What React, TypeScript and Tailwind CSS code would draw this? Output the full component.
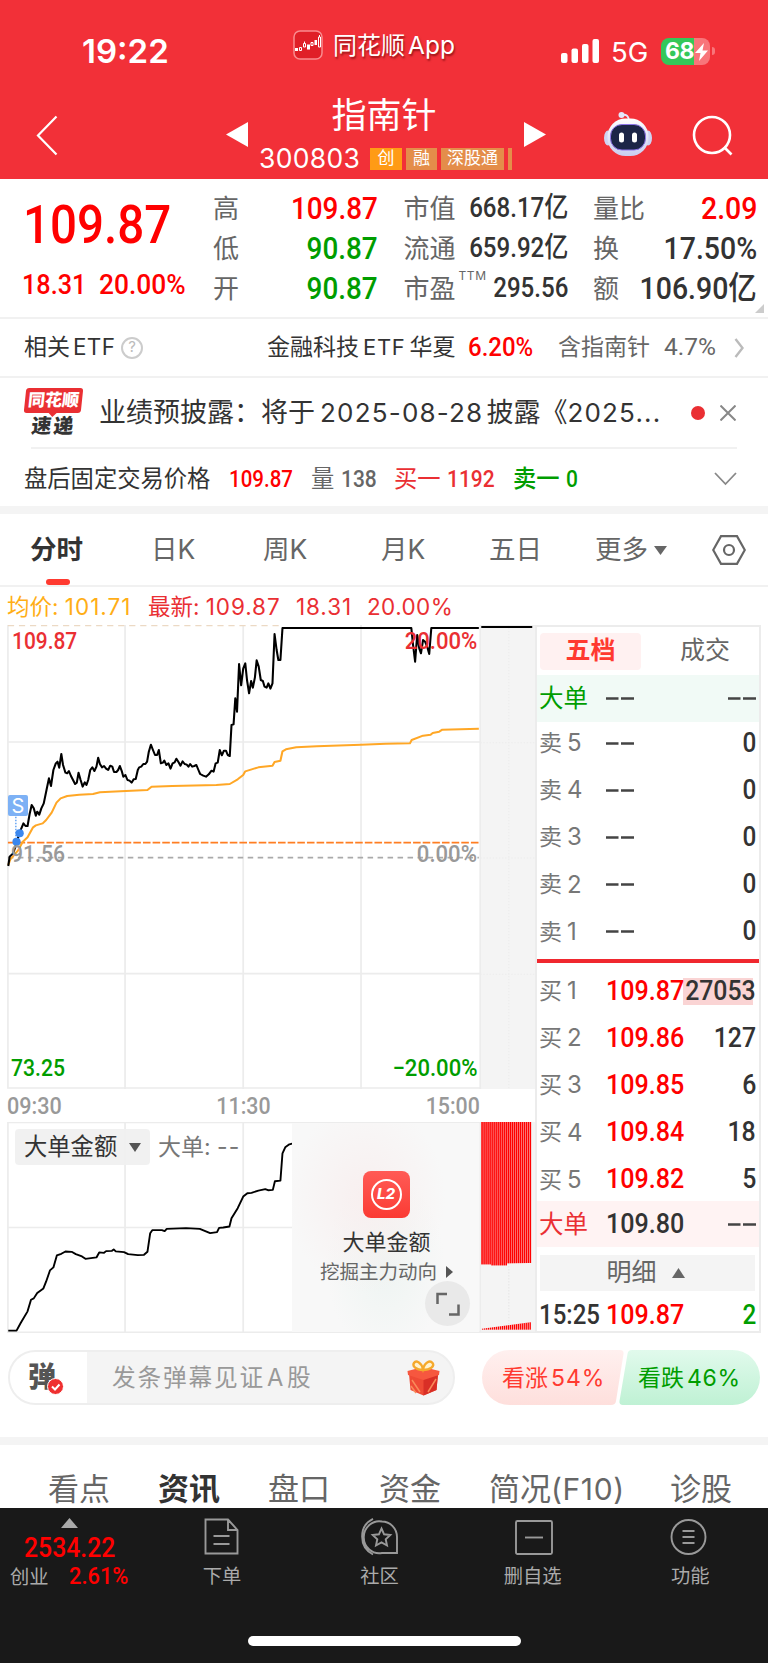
import type { ReactNode } from "react";

const PRICE_LINE =
  "24,828 28,800 38,790 48,760 56,730 62,715 68,700 74,708 80,708 86,672 92,645 98,655 104,677 108,665 114,674 120,655 127,640 135,600 142,565 148,588 155,540 162,520 167,515 172,533 178,492 183,525 190,548 195,550 200,543 206,558 212,570 218,582 223,578 228,548 234,570 240,590 246,577 251,585 256,570 262,540 268,532 274,543 280,530 285,503 290,522 296,532 302,528 308,536 314,540 320,527 326,530 331,546 338,546 343,540 348,528 354,545 358,560 364,555 370,570 376,572 382,578 388,568 394,567 400,540 404,532 410,530 416,522 422,522 427,515 432,485 438,464 444,480 450,495 456,495 461,480 467,520 473,518 477,512 483,525 489,520 495,536 501,520 507,517 512,506 518,516 524,527 530,514 536,522 542,524 547,530 552,522 558,530 564,528 570,525 576,540 581,552 590,557 598,560 606,553 614,542 620,545 626,520 632,518 638,480 644,496 650,482 656,482 661,495 667,498 672,405 678,403 683,325 688,365 694,222 700,286 706,236 712,220 717,270 723,310 729,273 734,293 740,262 745,211 751,230 757,270 763,273 768,290 774,293 779,280 785,296 791,280 797,132 803,180 808,210 814,210 820,114 1194,114 1199,165 1205,215 1211,135 1217,175 1222,190 1228,150 1234,155 1240,170 1246,192 1252,114 1390,114";

const AVG_LINE =
  "24,825 30,808 45,790 52,782 66,755 80,742 96,712 104,706 124,700 134,690 150,668 164,638 176,625 195,618 230,614 270,612 290,607 350,604 428,600 440,590 500,588 628,585 667,582 690,568 706,555 712,544 750,532 791,527 797,516 814,512 820,484 830,478 860,472 920,469 1048,464 1120,461 1190,460 1195,450 1228,437 1250,434 1256,429 1275,425 1284,419 1390,416";

const BIG_ORDER_LINE =
  "24,693 48,693 60,670 80,635 90,600 98,596 108,580 126,566 134,545 145,512 155,503 165,467 178,462 190,455 208,456 220,463 238,470 248,477 280,473 288,458 302,459 308,454 325,453 330,449 336,455 360,457 372,463 400,466 418,465 428,456 436,400 442,391 470,391 478,394 484,387 540,385 580,387 610,400 630,397 636,384 648,383 666,380 672,355 690,325 706,290 718,280 730,279 750,272 770,268 778,271 792,270 798,244 814,242 820,160 828,142 840,133 848,131";

const sells = ["5", "4", "3", "2", "1"];

const buys = [
  { level: "1", price: "109.87", volume: "27053" },
  { level: "2", price: "109.86", volume: "127" },
  { level: "3", price: "109.85", volume: "6" },
  { level: "4", price: "109.84", volume: "18" },
  { level: "5", price: "109.82", volume: "5" },
];

// 窄体数字
function Num({ children, className = "" }: { children: ReactNode; className?: string }) {
  return (
    <span className={`inline-block shrink-0 whitespace-nowrap font-medium font-[Roboto,'Noto_Sans_CJK_SC',sans-serif] ${className}`}>
      {children}
    </span>
  );
}

function StatusBar() {
  return (
    <div className="flex h-[86px] items-start text-white">
      <div className="ml-[82px] mt-[31px] w-[211px] text-[33px] leading-[40px] font-semibold">19:22</div>
      <svg className="mt-[30px] h-[30px] w-[30px] shrink-0" viewBox="0 0 30 30">
        <rect x="1" y="1" width="28" height="28" rx="6" fill="#e01f27" stroke="#f98c8f" strokeWidth="1.5" />
        <g fill="#fff">
          <rect x="2" y="18" width="3" height="3" />
          <rect x="14" y="14.500" width="3" height="5" />
          <rect x="21.500" y="10" width="2.500" height="5" />
        </g>
        <g fill="none" stroke="#fff" strokeWidth="1">
          <path d="M6.500 17.500h2v3h-2zM10.500 13.500h2v3.500h-2zM11.500 11.500v2M18 12.500h2v3h-2zM25.500 7h2v10h-2zM26.500 5v2" />
        </g>
      </svg>
      <div className="ml-[10px] mt-[28px] w-[228px] text-[24px] leading-[34px] whitespace-nowrap [text-shadow:1px_2px_2px_rgba(90,0,0,.6)]">
        同花顺<span className="ml-[3px] text-[24.500px]">App</span>
      </div>
      <svg className="mt-[39px] h-[24px] w-[38px] shrink-0" viewBox="0 0 38 24" fill="#fff">
        <rect x="0" y="14" width="6.500" height="10" rx="2" />
        <rect x="10.500" y="9.500" width="6.500" height="14.500" rx="2" />
        <rect x="21" y="5" width="6.500" height="19" rx="2" />
        <rect x="31.500" y="0" width="6.500" height="24" rx="2" />
      </svg>
      <div className="ml-[12px] mt-[33px] w-[50px] text-[27.500px] leading-[38px]">5G</div>
      <div className="mt-[38px] flex h-[27px] w-[49px] shrink-0 items-center rounded-[8px] bg-[linear-gradient(90deg,#34c759_68%,#f8757a_68%)]">
        <span className="ml-[4px] text-[23px] leading-none font-bold tracking-[-.5px]">68</span>
        <svg className="ml-px h-[18px] w-[13px] shrink-0" viewBox="0 0 13 18" fill="#fff">
          <path d="M9 0L0 10h5.500L4 18 13 7.500H7.500z" />
        </svg>
      </div>
      <div className="mt-[47px] ml-[1.500px] h-[8px] w-[3px] rounded-r-full bg-[#f8757a]" />
    </div>
  );
}

function Robot() {
  return (
    <svg className="h-[46px] w-[48px]" viewBox="0 0 48 46">
      <defs>
        <linearGradient id="robot" x1="0" y1="0" x2="0" y2="1">
          <stop offset="0" stopColor="#ffffff" />
          <stop offset="1" stopColor="#c9cdf0" />
        </linearGradient>
      </defs>
      <path d="M18 4c4-1 7 1 7 6" fill="none" stroke="#e4e6fb" strokeWidth="2" />
      <circle cx="17.500" cy="4" r="3" fill="#e4e6fb" />
      <ellipse cx="4" cy="27" rx="4" ry="7.500" fill="#cfd3f3" />
      <ellipse cx="44" cy="27" rx="4" ry="7.500" fill="#cfd3f3" />
      <rect x="3.500" y="7.500" width="41" height="37.500" rx="18" fill="url(#robot)" />
      <rect x="6.500" y="13.500" width="35" height="25.500" rx="11.500" fill="#1c2547" stroke="#8d74e8" strokeWidth="1" />
      <rect x="15" y="21.500" width="5" height="10" rx="2.500" fill="#fff" />
      <rect x="28" y="21.500" width="5" height="10" rx="2.500" fill="#fff" />
    </svg>
  );
}

function Header() {
  return (
    <header className="h-[179px] bg-[#f23038]">
      <StatusBar />
      <div className="flex h-[93px] text-white">
        <svg className="ml-[36px] mt-[29px] h-[42px] w-[22px] shrink-0" viewBox="0 0 22 42" fill="none" stroke="#fff" strokeWidth="2.200">
          <path d="M20.500 1.500L2 20.500l18.500 19" />
        </svg>
        <svg className="ml-[168px] mt-[36px] h-[25px] w-[22px] shrink-0" viewBox="0 0 22 25" fill="#fff">
          <path d="M22 0v25L0 12.500z" />
        </svg>
        <div className="ml-[11px] w-[255px] shrink-0">
          <div className="mt-[8px] ml-[-5px] h-[42px] text-center text-[35px] leading-[42px]">指南针</div>
          <div className="mt-[9px] flex items-center whitespace-nowrap">
            <div className="w-[111px] text-[26.500px] leading-[26px] tracking-[.3px]">300803</div>
            <div className="mt-[2px] flex h-[22px] gap-[4px] text-center text-[17px] leading-[21px]">
              <span className="w-[32px] bg-[#ff9b15]">创</span>
              <span className="w-[31px] bg-[#e48d4a]">融</span>
              <span className="w-[63px] bg-[#e48d4a]">深股通</span>
              <span className="w-[4px] bg-[#e48d4a]" />
            </div>
          </div>
        </div>
        <svg className="ml-[10px] mt-[36px] h-[25px] w-[22px] shrink-0" viewBox="0 0 22 25" fill="#fff">
          <path d="M0 0v25l22-12.500z" />
        </svg>
        <div className="ml-[58px] mt-[25px] shrink-0">
          <Robot />
        </div>
        <svg className="ml-[40px] mt-[29px] h-[41px] w-[42px] shrink-0" viewBox="0 0 42 41" fill="none" stroke="#fff" strokeWidth="2.600">
          <circle cx="20" cy="20" r="18" />
          <path d="M32 32l7.500 7.500" />
        </svg>
      </div>
    </header>
  );
}

function Quote() {
  return (
    <section className="flex h-[138px] text-[26px] text-[#666]">
      <div className="w-[213px] pl-[23px] text-[#ff0000]">
        <Num className="mt-[16px] origin-left scale-x-[.88] text-[54px] leading-[60px]">109.87</Num>
        <div className="mt-[11px] -ml-px flex text-[28px] leading-[38px]">
          <Num className="w-[77px] origin-left scale-x-[.9]">18.31</Num>
          <Num className="origin-left scale-x-[.94]">20.00%</Num>
        </div>
      </div>
      <div className="w-[190.500px] pt-[9px]">
        {[
          ["高", "109.87", "text-[#ff0000]"],
          ["低", "90.87", "text-[#009d00]"],
          ["开", "90.87", "text-[#009d00]"],
        ].map(([label, value, color]) => (
          <div key={label} className="flex h-[40px] w-[165px] items-center justify-between">
            <span>{label}</span>
            <Num className={`origin-right scale-x-[.87] text-[32px] leading-[40px] ${color}`}>{value}</Num>
          </div>
        ))}
      </div>
      <div className="w-[189.500px] pt-[9px]">
        {[
          ["市值", "668.17亿"],
          ["流通", "659.92亿"],
          ["市盈", "295.56"],
        ].map(([label, value]) => (
          <div key={label} className="flex h-[40px] w-[165px] items-center justify-between whitespace-nowrap">
            <span className="flex">
              {label}
              {label === "市盈" && <span className="ml-[3px] w-[26px] text-[12px] leading-[14px] tracking-[.6px]">TTM</span>}
            </span>
            <Num className="-ml-[30px] origin-right scale-x-[.86] text-[28px] leading-[40px] text-[#333]">{value}</Num>
          </div>
        ))}
      </div>
      <div className="relative w-[175px] pt-[9px]">
        {[
          ["量比", "2.09", "text-[#ff0000]"],
          ["换", "17.50%", "text-[#333]"],
          ["额", "106.90亿", "text-[#333]"],
        ].map(([label, value, color]) => (
          <div key={label} className="flex h-[40px] w-[164px] items-center justify-between whitespace-nowrap">
            <span>{label}</span>
            <Num className={`-ml-[30px] origin-right scale-x-[.89] text-[32px] leading-[40px] ${color}`}>{value}</Num>
          </div>
        ))}
        <svg className="absolute right-[4px] bottom-[4px] h-[9px] w-[9px]" viewBox="0 0 9 9" fill="#ccc">
          <path d="M9 0v9H0z" />
        </svg>
      </div>
    </section>
  );
}

function EtfRow() {
  return (
    <section className="flex h-[59px] items-center border-t-2 border-[#f1f1f1] text-[23px] whitespace-nowrap text-[#333]">
      <span className="ml-[24px] w-[97px]">
        相关<span className="ml-[3px] text-[22.500px] tracking-[.3px]">ETF</span>
      </span>
      <span className="flex h-[22px] w-[22px] items-center justify-center rounded-full border-2 border-[#ccc] text-[15px] text-[#bbb]">?</span>
      <span className="ml-[124px] w-[201px]">
        金融科技<span className="mx-[4px] text-[22px] tracking-[.7px]">ETF</span>华夏
      </span>
      <Num className="w-[90px] origin-left scale-x-[.96] text-[25px] text-[#ff0000]">6.20%</Num>
      <span className="w-[106px] text-[#666]">含指南针</span>
      <span className="w-[70px] font-[Roboto] text-[24.500px] text-[#666]">4.7%</span>
      <svg className="h-[20px] w-[10px]" viewBox="0 0 10 20" fill="none" stroke="#bbb" strokeWidth="2.400">
        <path d="M1.500 1l7 9-7 9" />
      </svg>
    </section>
  );
}

function News() {
  return (
    <section className="border-t-2 border-[#f1f1f1]">
      <div className="flex h-[69px] items-center text-[27px] whitespace-nowrap text-[#333]">
        <div className="ml-[25px] w-[57px] text-center">
          <div className="relative h-[25px] -skew-x-6 rounded-[3px] bg-[#ea2f33] text-[17px] leading-[25px] font-black text-white">
            同花顺
            <div className="absolute top-[24px] left-[24px] border-x-[5px] border-t-[5px] border-x-transparent border-t-[#ea2f33]" />
          </div>
          <div className="mt-px h-[23px] -skew-x-6 text-[20px] leading-[24px] font-black tracking-[2px]">速递</div>
        </div>
        <div className="ml-[17px] w-[594px] pt-px">
          业绩预披露：将于<span className="mr-[3px] ml-[5px] text-[26px] tracking-[1.200px]">2025-08-28</span>披露《
          <span className="text-[26px] tracking-[1.200px]">2025...</span>
        </div>
        <span className="-ml-[2px] mr-[15px] h-[14px] w-[14px] rounded-full bg-[#ea2f33]" />
        <svg className="h-[16px] w-[16px]" viewBox="0 0 16 16" stroke="#888" strokeWidth="2">
          <path d="M.5.5l15 15M15.500.5l-15 15" />
        </svg>
      </div>
      <div className="mx-[31px] h-[2px] bg-[#f1f1f1]" />
      <div className="flex h-[57px] items-center pt-[3px] text-[23.300px] whitespace-nowrap">
        <span className="ml-[24px] w-[205px] text-[#333]">盘后固定交易价格</span>
        <Num className="w-[82px] origin-left scale-x-[.88] text-[#ff0000]">109.87</Num>
        <span className="w-[30px] text-[#666]">量</span>
        <Num className="w-[53px] origin-left scale-x-[.9] text-[#666]">138</Num>
        <span className="w-[53px] text-[#ea2f33]">买一</span>
        <Num className="w-[66px] origin-left scale-x-[.9] text-[#ea2f33]">1192</Num>
        <span className="w-[53px] font-medium text-[#009d00]">卖一</span>
        <Num className="w-[148px] origin-left scale-x-[.9] text-[#009d00]">0</Num>
        <svg className="h-[14px] w-[23px] shrink-0" viewBox="0 0 23 14" fill="none" stroke="#888" strokeWidth="1.800">
          <path d="M1 1l10.500 11L22 1" />
        </svg>
      </div>
    </section>
  );
}

function PeriodTabs() {
  return (
    <nav className="flex h-[73px] items-center border-b-2 border-[#f1f1f1] pl-[30px] text-[26.500px] whitespace-nowrap text-[#666]">
      <div className="relative flex h-full w-[121px] items-center pt-px font-bold text-[#333]">
        分时
        <span className="absolute bottom-0 left-[16px] h-[6px] w-[24px] rounded-[3px] bg-[#ff3a30]" />
      </div>
      <div className="w-[112px] pt-px">日K</div>
      <div className="w-[118px] pt-px">周K</div>
      <div className="w-[108px] pt-px">月K</div>
      <div className="w-[106px] pt-px">五日</div>
      <div className="flex w-[117px] items-center gap-[6px] pt-px">
        更多
        <svg className="h-[9px] w-[13px]" viewBox="0 0 13 9" fill="#666">
          <path d="M0 0h13L6.500 9z" />
        </svg>
      </div>
      <svg className="h-[30px] w-[34px] shrink-0" viewBox="0 0 34 30" fill="none" stroke="#666" strokeWidth="2.200">
        <path d="M9 1.200h16L32.800 15 25 28.800H9L1.200 15z" />
        <circle cx="17" cy="15" r="5" />
      </svg>
    </nav>
  );
}

function PriceChart() {
  return (
    <div className="relative h-[464px]">
      <svg className="block h-[464px] w-[535px]" viewBox="0 105 1553 1392" preserveAspectRatio="none" fill="none">
        <rect x="1394" y="105" width="159" height="1392" fill="#f4f4f4" />
        <g stroke="#ececec" strokeWidth="5">
          <path d="M23 105V1494H1394M363 105V1497M706 105V1497M1048 105V1497M1394 105V1497M23 456H1394M23 1151H1394" />
          <path d="M1477 105V1497M1394 458H1553M1394 804H1553M1394 1153H1553" strokeWidth="3" strokeDasharray="4 5" />
          <path d="M1394 107H1553" strokeWidth="3" />
        </g>
        <path d="M23 107H820" stroke="#ecd9c4" strokeWidth="4" strokeDasharray="18 14" />
        <path d="M23 803H1390" stroke="#aaa" strokeWidth="5" strokeDasharray="16 13" />
        <path d="M23 758H1390" stroke="#ff7e22" strokeWidth="5" strokeDasharray="22 6" />
        <polyline points={AVG_LINE} stroke="#ffa726" strokeWidth="6" strokeLinejoin="round" />
        <polyline points={PRICE_LINE} stroke="#000" strokeWidth="6" strokeLinejoin="round" />
        <path d="M1397 111H1545" stroke="#000" strokeWidth="6" />
        <path d="M46 680V745" stroke="#5a9cf0" strokeWidth="4" strokeDasharray="5 4" />
        <ellipse cx="57" cy="730" rx="12" ry="12" fill="#3b87ee" />
        <ellipse cx="48" cy="755" rx="12" ry="12" fill="#3b87ee" />
      </svg>
      <div className="absolute top-[170px] left-[8px] h-[21px] w-[20px] rounded-[2px] bg-[#7db1f5] text-center text-[20px] leading-[22px] text-white">S</div>
      <Num className="absolute top-px left-[12px] origin-left scale-x-[.89] text-[23.500px] leading-[30px] text-[#ea2f33]">109.87</Num>
      <Num className="absolute top-px right-[58px] origin-right scale-x-[.94] text-[23.500px] leading-[30px] text-[#ea2f33]">20.00%</Num>
      <Num className="absolute top-[214px] left-[11px] origin-left scale-x-[.9] text-[23.500px] leading-[30px] text-[#999]">91.56</Num>
      <Num className="absolute top-[214px] right-[58px] origin-right scale-x-[.94] text-[23.500px] leading-[30px] text-[#999]">0.00%</Num>
      <Num className="absolute top-[428px] left-[10.500px] origin-left scale-x-[.9] text-[23.500px] leading-[30px] text-[#009d00]">73.25</Num>
      <Num className="absolute top-[428px] right-[58px] origin-right scale-x-[.94] text-[23.500px] leading-[30px] text-[#009d00]">−20.00%</Num>
    </div>
  );
}

function BigOrderChart() {
  const bars = Array.from({ length: 25 }, (_, i) => i);
  return (
    <div className="relative h-[211px]">
      <svg className="block h-[211px] w-[535px]" viewBox="0 66 1553 634" preserveAspectRatio="none" fill="none">
        <rect x="1394" y="66" width="159" height="634" fill="#f4f4f4" />
        <path d="M23 66V698H1553M23 67H1394M363 66V698M706 66V698M1394 66V698M23 383H850" stroke="#ececec" strokeWidth="5" />
        <path d="M1477 490V690" stroke="#e6e6e6" strokeWidth="3" strokeDasharray="4 5" />
        <polyline points={BIG_ORDER_LINE} stroke="#000" strokeWidth="5.500" strokeLinejoin="round" />
        {bars.map((i) => (
          <g key={i} fill="#ff0000">
            <rect x={1397 + i * 5.84} y="64" width="4.600" height={i < 5 ? 430 : i < 13 ? 433 : 428 - i * 0.1} />
            <rect x={1399 + i * 5.75} y={690 - i * 0.8 - 3} width="4" height={i * 0.8 + 3} />
          </g>
        ))}
      </svg>
      <div className="absolute top-[7px] left-[15px] flex h-[36px] w-[135px] items-center justify-between rounded-[4px] bg-[#f0f0f0]/90 pr-[9px] pl-[9px] text-[23.300px] whitespace-nowrap text-[#333]">
        大单金额
        <svg className="h-[9px] w-[12px]" viewBox="0 0 12 9" fill="#555">
          <path d="M0 0h12L6 9z" />
        </svg>
      </div>
      <div className="absolute top-[7px] left-[158px] text-[23px] leading-[36px] whitespace-nowrap text-[#777]">
        大单: <span className="tracking-[1px]">--</span>
      </div>
      <div className="absolute top-px left-[292px] flex h-[209px] w-[187px] flex-col items-center bg-[radial-gradient(ellipse_at_40%_36%,#f8efef_0%,transparent_50%),radial-gradient(ellipse_at_50%_68%,#eef4f2_0%,transparent_45%)] bg-[#f8f8f8] pl-[2px]">
        <div className="mt-[48px] flex h-[47px] w-[47px] items-center justify-center rounded-[8px] bg-linear-to-b from-[#ff5a55] to-[#fb3a33]">
          <span className="flex h-[31px] w-[31px] items-center justify-center rounded-full border-2 border-white pr-px text-[15px] font-extrabold text-white italic">L2</span>
        </div>
        <div className="mt-[10px] text-[22px] leading-[28px] text-[#333]">大单金额</div>
        <div className="mt-[2px] flex items-center text-[19.500px] leading-[28px] text-[#666]">
          挖掘主力动向
          <svg className="ml-[9px] h-[12px] w-[7px]" viewBox="0 0 7 12" fill="#555">
            <path d="M0 0l7 6-7 6z" />
          </svg>
        </div>
      </div>
      <div className="absolute top-[159px] left-[425px] flex h-[45px] w-[45px] items-center justify-center rounded-full bg-[#e9e9e9]">
        <svg className="h-[24px] w-[24px]" viewBox="0 0 24 24" fill="none" stroke="#666" strokeWidth="2.500">
          <path d="M11 2H1.500v10M13 22.500h9.500V12.500" />
        </svg>
      </div>
    </div>
  );
}

function OrderBook() {
  return (
    <div className="flex h-[708px] w-[226px] flex-col border-2 border-[#ececec] bg-white text-[#333]">
      <div className="flex h-[48px] shrink-0 items-center text-[25px]">
        <div className="ml-[3px] flex h-[37px] w-[101px] items-center justify-center rounded-[4px] bg-[#fff1f1] font-bold text-[#ff3a30]">五档</div>
        <div className="ml-[12px] w-[104px] text-center text-[#666]">成交</div>
      </div>
      <div className="flex h-[47px] shrink-0 items-center bg-[#f1faf6] pr-[3px] pl-[2px]">
        <span className="w-[67px] text-[24.500px] text-[#009d00]">大单</span>
        <Dashes />
        <span className="ml-auto">
          <Dashes />
        </span>
      </div>
      <div className="h-[237px] shrink-0 text-[23px] text-[#777]">
        {sells.map((level) => (
          <div key={level} className="flex h-[47.200px] items-center pr-[3px] pb-[5px] pl-[2px]">
            <span className="w-[28px]">卖</span>
            <span className="w-[39px] text-[24px]">{level}</span>
            <Dashes />
            <Num className="ml-auto origin-right scale-x-[.9] text-[27px] leading-none text-[#333]">0</Num>
          </div>
        ))}
      </div>
      <div className="h-[3.500px] shrink-0 bg-[#f0282f]" />
      <div className="h-[238.500px] shrink-0 pt-[5px] text-[23px] text-[#777]">
        {buys.map((item) => (
          <div key={item.level} className="flex h-[47.200px] items-center pr-[3px] pl-[2px]">
            <span className="w-[28px] shrink-0">买</span>
            <span className="w-[39px] shrink-0 text-[24px]">{item.level}</span>
            <Num className="w-[74px] origin-left scale-x-[.93] text-[27px] leading-none text-[#ff0000]">{item.price}</Num>
            <span className={`ml-auto flex h-[27px] items-center justify-end ${item.level === "1" ? "w-[73px] bg-[linear-gradient(90deg,#fad4d4_70px,transparent_70px)]" : "w-[60px]"}`}>
              <Num className="origin-right scale-x-[.92] text-[27px] leading-none text-[#333]">{item.volume}</Num>
            </span>
          </div>
        ))}
      </div>
      <div className="flex h-[46px] shrink-0 items-center bg-[#fff3f3] pr-[3px] pl-[2px]">
        <span className="w-[67px] text-[24.500px] text-[#ea2f33]">大单</span>
        <Num className="origin-left scale-x-[.93] text-[27px] leading-none">109.80</Num>
        <span className="ml-auto">
          <Dashes />
        </span>
      </div>
      <div className="mt-[8px] ml-[3px] flex h-[36px] w-[215px] shrink-0 items-center justify-center gap-[15px] bg-[#f4f4f4] pr-[4px] text-[25px] text-[#666]">
        明细
        <svg className="h-[10px] w-[13px]" viewBox="0 0 13 10" fill="#666">
          <path d="M0 10h13L6.500 0z" />
        </svg>
      </div>
      <div className="flex h-[41px] shrink-0 items-center pt-[7px] pr-[3px] pl-[2px] text-[27px] leading-none">
        <Num className="w-[67px] origin-left scale-x-[.89]">15:25</Num>
        <Num className="origin-left scale-x-[.93] text-[#ff0000]">109.87</Num>
        <Num className="ml-auto origin-right scale-x-[.9] text-[#009d00]">2</Num>
      </div>
    </div>
  );
}

function Dashes() {
  return (
    <svg className="h-[3px] w-[28px]" viewBox="0 0 28 3" fill="#444">
      <path d="M0 .3h12.500v2.400H0zM15 .3h13v2.400H15z" />
    </svg>
  );
}

function Danmaku() {
  return (
    <section className="flex h-[104px] pt-[17px]">
      <div className="ml-[8px] flex h-[55px] w-[447px] items-center overflow-hidden rounded-full border-2 border-[#eee] bg-[#f4f4f4]">
        <div className="relative h-full w-[77px] bg-white pl-[18px] text-[28px] leading-[50px] font-black text-[#555]">
          弹
          <svg className="absolute top-[26px] left-[37px] h-[17px] w-[17px]" viewBox="0 0 17 17">
            <circle cx="8.500" cy="8.500" r="8" fill="#ef3030" stroke="#fff" />
            <path d="M5 8.500l3 3 4.500-5" fill="none" stroke="#fff" strokeWidth="2" />
          </svg>
        </div>
        <div className="w-[320px] pl-[25px] text-[23.700px] tracking-[1.800px] whitespace-nowrap text-[#999]">
          发条弹幕见证<span className="mx-[2px]">A</span>股
        </div>
        <svg className="h-[36px] w-[33px] shrink-0" viewBox="0 0 33 36">
          <path d="M2 14l14.500 5L31 14l-1.500 16-13 5.500-13-5.500z" fill="#ee4a35" />
          <path d="M16.500 19L31 14l-1.500 16-13 5.500z" fill="#d92f26" />
          <path d="M5 20l8 12M4 26l5 7M29 19l-8 13" stroke="#f98a5a" strokeWidth="1.500" />
          <path d="M.5 11L16 7l16.500 4-.5 4-15.500 5L1 15z" fill="#f6573f" />
          <path d="M16 10C9 10 5 6 7 3s7-1 9 6c2-7 7-9 9.500-6s-2 7-9.500 7z" fill="#fff3d0" stroke="#f5a92c" strokeWidth="2.400" />
        </svg>
      </div>
      <div className="relative ml-[27px] flex h-[55px] w-[278px] items-center text-[23px] whitespace-nowrap">
        <svg className="absolute inset-0 h-[55px] w-[278px]" viewBox="0 0 278 55">
          <defs>
            <linearGradient id="up" x1="0" y1="0" x2="0" y2="1">
              <stop offset="0" stopColor="#fff0ef" />
              <stop offset="1" stopColor="#fedfdc" />
            </linearGradient>
            <linearGradient id="down" x1="0" y1="0" x2="0" y2="1">
              <stop offset="0" stopColor="#e1faec" />
              <stop offset="1" stopColor="#bff1d4" />
            </linearGradient>
          </defs>
          <path d="M27.500 0H138q4 0 3.500 4L134 51q-.5 4-5 4H27.500a27.500 27.500 0 010-55z" fill="url(#up)" />
          <path d="M150 0h100.500a27.500 27.500 0 010 55H141q-4 0-3.500-4L145.500 4q.5-4 4.500-4z" fill="url(#down)" />
        </svg>
        <span className="relative ml-[20px] w-[136px] pt-px text-[#ff3a30]">
          看涨<span className="ml-[3px] tracking-[.9px]">54%</span>
        </span>
        <span className="relative pt-px text-[#009d00]">
          看跌<span className="ml-[3px] tracking-[.7px]">46%</span>
        </span>
      </div>
    </section>
  );
}

function BottomBar() {
  return (
    <footer className="h-[155px] bg-[#191919] text-[19.300px] whitespace-nowrap text-[#aaa]">
      <div className="flex h-[128px]">
        <div className="w-[138px] pt-[10px]">
          <svg className="ml-[61px] h-[10px] w-[17px]" viewBox="0 0 17 10" fill="#aaa">
            <path d="M0 10h17L8.500 0z" />
          </svg>
          <Num className="ml-[24px] mt-[3px] origin-left scale-x-[.9] text-[27.500px] leading-[34px] text-[#ff0000]">2534.22</Num>
          <div className="mt-[-4px] flex items-center">
            <span className="ml-[10px] w-[59px] pt-[2px]">创业</span>
            <Num className="origin-left scale-x-[.93] text-[23.500px] leading-[28px] text-[#ff0000]">2.61%</Num>
          </div>
        </div>
        <Item label="下单" className="w-[169px]">
          <path d="M1.500 1.500h22.500l9.500 10.500v23.500h-32zM24 1.500V12h9.500M9.500 18h16M9.500 26h16" />
        </Item>
        <Item label="社区" className="w-[147px]">
          <path d="M20 3.500a15.500 16 0 100 31.500h15V19A15 15.500 0 0020 3.500zM11 .8C-3.500 8-3.500 29 11 36.500" />
          <path d="M19.500 10.500l2.600 5.800 6.200.7-4.600 4.300 1.300 6.200-5.500-3.100-5.500 3.100 1.300-6.200-4.600-4.300 6.200-.7z" />
        </Item>
        <Item label="删自选" className="w-[160px]">
          <rect x="1" y="3" width="36" height="33" rx="1.500" />
          <path d="M10 19.500h18" />
        </Item>
        <Item label="功能" className="w-[156px]">
          <circle cx="16.500" cy="19" r="17" />
          <path d="M10.500 13h12M10.500 19h12M10.500 25h12" />
        </Item>
      </div>
      <div className="mx-auto h-[10px] w-[273px] rounded-full bg-white" />
    </footer>
  );
}

function Item({ label, className, children }: { label: string; className: string; children: ReactNode }) {
  return (
    <div className={`flex flex-col items-center pt-[10px] ${className}`}>
      <svg className="h-[38px] w-[36px] overflow-visible" viewBox="0 0 36 38" fill="none" stroke="#999" strokeWidth="1.900">
        {children}
      </svg>
      <span className="mt-[6px] leading-[28px]">{label}</span>
    </div>
  );
}

export default function App() {
  return (
    <div className="h-[1663px] w-[768px] overflow-hidden bg-white font-[Inter,'Noto_Sans_CJK_SC',sans-serif]">
      <Header />
      <Quote />
      <EtfRow />
      <News />
      <div className="h-[8px] bg-[#f4f4f4]" />
      <PeriodTabs />
      <div className="flex h-[38px] items-center pt-px text-[22.500px] whitespace-nowrap text-[#ea2f33]">
        <span className="ml-[7px] w-[141px] text-[#ffae16]">
          均价: <span className="tracking-[1px]">101.71</span>
        </span>
        <span className="w-[148px]">
          最新: <span className="tracking-[.9px]">109.87</span>
        </span>
        <span className="w-[71px] tracking-[.9px]">18.31</span>
        <span className="tracking-[.4px]">20.00%</span>
      </div>
      <div className="flex h-[708px]">
        <div className="w-[535px] shrink-0">
          <PriceChart />
          <div className="flex h-[33px] w-[480px] items-center justify-between pl-[7px] text-[#999]">
            <Num className="origin-left scale-x-[.9] text-[24px]">09:30</Num>
            <Num className="scale-x-[.89] text-[24px]">11:30</Num>
            <Num className="origin-right scale-x-[.89] text-[24px]">15:00</Num>
          </div>
          <BigOrderChart />
        </div>
        <OrderBook />
      </div>
      <Danmaku />
      <div className="h-[8px] bg-[#f4f4f4]" />
      <nav className="flex h-[63px] pt-[23px] pl-[48px] text-[31px] leading-[42px] whitespace-nowrap text-[#666]">
        <span className="w-[110px]">看点</span>
        <span className="w-[110px] font-bold text-[#333]">资讯</span>
        <span className="w-[111px]">盘口</span>
        <span className="w-[110px]">资金</span>
        <span className="w-[181px]">
          简况<span className="text-[30px] tracking-[.6px]">(F10)</span>
        </span>
        <span>诊股</span>
      </nav>
      <BottomBar />
    </div>
  );
}
